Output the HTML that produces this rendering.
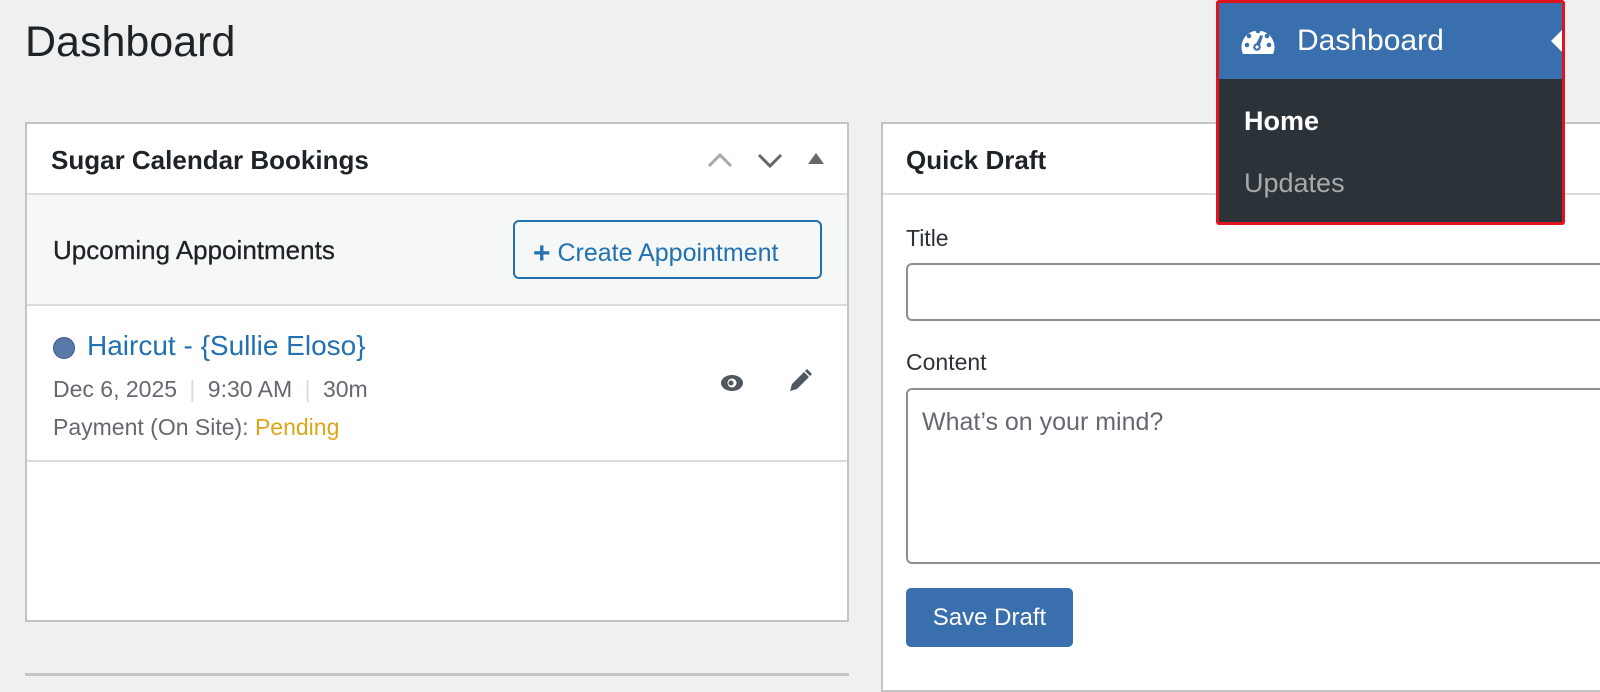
<!DOCTYPE html>
<html><head><style>
*{box-sizing:border-box;margin:0;padding:0}
body{width:1600px;height:676px;background:#f0f0f1;font-family:"Liberation Sans",sans-serif;color:#1d2327;position:relative;overflow:hidden}
.abs{position:absolute;white-space:nowrap}
h1{position:absolute;left:25px;top:18px;font-size:43px;font-weight:400}
.box{position:absolute;background:#fff;border:2px solid #c3c4c7}
.t{font-size:26px;font-weight:700}
</style></head><body>
<h1>Dashboard</h1>
<div class="box" style="left:25px;top:122px;width:824px;height:500px">
  <div class="abs t" style="left:24px;top:21px">Sugar Calendar Bookings</div>
  <svg class="abs" style="left:678px;top:24px" width="120" height="24">
    <polyline points="4,18 15,7 26,18" fill="none" stroke="#a7aaad" stroke-width="3"/>
    <polyline points="54,7 65,18 76,7" fill="none" stroke="#646970" stroke-width="3"/>
    <polygon points="111,5 119,16 103,16" fill="#646970"/>
  </svg>
  <div class="abs" style="left:0;top:69px;width:820px;height:113px;background:#f6f7f7;border-top:2px solid #dcdcde;border-bottom:2px solid #dcdcde">
    <div class="abs" style="left:26px;top:40px;font-size:26px;color:#1d2327;-webkit-text-stroke:0.3px #1d2327">Upcoming Appointments</div>
    <div class="abs" style="left:486px;top:25px;width:309px;height:59px;border:2px solid #2271b1;border-radius:6px;color:#2271b1;font-size:25px;padding-top:13px;padding-left:18px"><b style="font-size:30px;position:relative;top:2px">+</b> Create Appointment</div>
  </div>
  <div class="abs" style="left:0;top:182px;width:820px;height:156px;border-bottom:2px solid #dcdcde">
    <div class="abs" style="left:26px;top:31px;width:22px;height:22px;border-radius:50%;background:#5b79a8;border:1px solid #3d5a8a"></div>
    <div class="abs" style="left:60px;top:24px;font-size:28px;color:#2271b1">Haircut - {Sullie Eloso}</div>
    <div class="abs" style="left:26px;top:70px;font-size:23px;color:#646970">Dec 6, 2025 <span style="color:#dcdcde;margin:0 6px">|</span> 9:30 AM <span style="color:#dcdcde;margin:0 6px">|</span> 30m</div>
    <div class="abs" style="left:26px;top:108px;font-size:23px;color:#646970">Payment (On Site): <span style="color:#dba617">Pending</span></div>
    <svg class="abs" style="left:692px;top:66px" width="30" height="22" viewBox="0 0 30 22"><ellipse cx="13" cy="11" rx="11" ry="8" fill="#50575e"/><circle cx="13" cy="11" r="4.5" fill="#fff"/><circle cx="12" cy="11" r="2.5" fill="#50575e"/></svg>
    <svg class="abs" style="left:760px;top:62px" width="26" height="26" viewBox="0 0 26 26"><path d="M3 23 L5 16 L17 4 L22 9 L10 21 Z" fill="#50575e"/><path d="M18 3 L20 1 L25 6 L23 8Z" fill="#50575e"/></svg>
  </div>
</div>
<div class="abs" style="left:25px;top:673px;width:824px;height:3px;background:#c3c4c7"></div>
<div class="box" style="left:881px;top:122px;width:740px;height:570px">
  <div class="abs t" style="left:23px;top:21px">Quick Draft</div>
  <div class="abs" style="left:0;top:69px;width:740px;border-top:2px solid #dcdcde"></div>
  <div class="abs" style="left:23px;top:101px;font-size:23px;color:#2c3338">Title</div>
  <div class="abs" style="left:23px;top:139px;width:720px;height:58px;border:2px solid #8c8f94;border-radius:6px"></div>
  <div class="abs" style="left:23px;top:225px;font-size:23px;color:#2c3338">Content</div>
  <div class="abs" style="left:23px;top:264px;width:720px;height:176px;border:2px solid #8c8f94;border-radius:6px;padding:18px 14px;font-size:25px;color:#646970">What’s on your mind?</div>
  <div class="abs" style="left:23px;top:464px;width:167px;height:59px;background:#3a6fad;border-radius:5px;color:#fff;font-size:24px;text-align:center;line-height:59px">Save Draft</div>
</div>
<div class="abs" style="left:1216px;top:0;width:349px;height:225px;border:3px solid #e0141e;border-radius:3px;background:#2c3338;overflow:hidden">
  <div class="abs" style="left:0;top:0;width:343px;height:76px;background:#3a6fad"></div>
  <svg class="abs" style="left:20px;top:22px" width="38" height="30" viewBox="0 0 38 30"><path d="M4 29 A16.5 16.5 0 1 1 34 29 Z" fill="#fff"/><g fill="#3a6fad"><circle cx="8" cy="20" r="2.3"/><circle cx="10" cy="11" r="2.3"/><circle cx="19" cy="6" r="2.3"/><circle cx="28" cy="11" r="2.3"/><circle cx="30" cy="20" r="2.3"/><circle cx="18" cy="22" r="3.8"/><path d="M16 21 L21.5 10 L24 11 L20 23Z"/></g><circle cx="18" cy="22" r="1.6" fill="#fff"/></svg>
  <div class="abs" style="left:78px;top:21px;font-size:30px;color:#fff">Dashboard</div>
  <div class="abs" style="left:332px;top:26px;width:0;height:0;border-top:12px solid transparent;border-bottom:12px solid transparent;border-right:12px solid #fff"></div>
  <div class="abs" style="left:25px;top:103px;font-size:27px;font-weight:700;color:#fff">Home</div>
  <div class="abs" style="left:25px;top:165px;font-size:27px;color:#a7aaad">Updates</div>
</div>
</body></html>
